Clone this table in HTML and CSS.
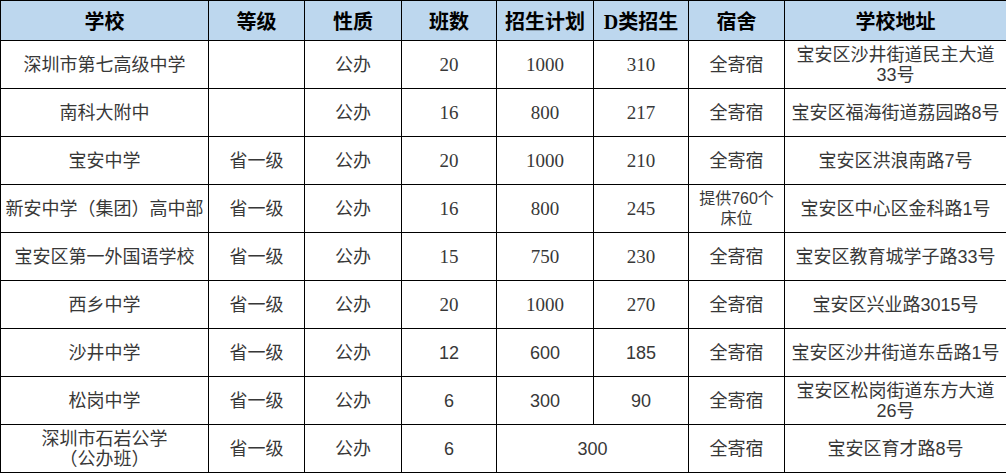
FILE: index.html
```html
<!DOCTYPE html>
<html lang="zh-CN">
<head>
<meta charset="utf-8">
<title>宝安区高中学校</title>
<link rel="stylesheet" href="styles.css">
</head>
<body>
<table class="schools">
  <colgroup>
    <col class="c-name"><col class="c-level"><col class="c-type"><col class="c-class">
    <col class="c-plan"><col class="c-d"><col class="c-dorm"><col class="c-addr">
  </colgroup>
  <thead>
    <tr class="head">
      <th>学校</th><th>等级</th><th>性质</th><th>班数</th><th>招生计划</th><th>D类招生</th><th>宿舍</th><th>学校地址</th>
    </tr>
  </thead>
  <tbody>
    <tr>
      <td>深圳市第七高级中学</td><td></td><td>公办</td><td class="serif">20</td><td class="serif">1000</td><td class="serif">310</td><td>全寄宿</td><td class="two">宝安区沙井街道民主大道<br>33号</td>
    </tr>
    <tr>
      <td>南科大附中</td><td></td><td>公办</td><td class="serif">16</td><td class="serif">800</td><td class="serif">217</td><td>全寄宿</td><td>宝安区福海街道荔园路8号</td>
    </tr>
    <tr>
      <td>宝安中学</td><td>省一级</td><td>公办</td><td class="serif">20</td><td class="serif">1000</td><td class="serif">210</td><td>全寄宿</td><td>宝安区洪浪南路7号</td>
    </tr>
    <tr>
      <td>新安中学（集团）高中部</td><td>省一级</td><td>公办</td><td class="serif">16</td><td class="serif">800</td><td class="serif">245</td><td class="two small">提供760个<br>床位</td><td>宝安区中心区金科路1号</td>
    </tr>
    <tr>
      <td>宝安区第一外国语学校</td><td>省一级</td><td>公办</td><td class="serif">15</td><td class="serif">750</td><td class="serif">230</td><td>全寄宿</td><td>宝安区教育城学子路33号</td>
    </tr>
    <tr>
      <td>西乡中学</td><td>省一级</td><td>公办</td><td class="serif">20</td><td class="serif">1000</td><td class="serif">270</td><td>全寄宿</td><td>宝安区兴业路3015号</td>
    </tr>
    <tr>
      <td>沙井中学</td><td>省一级</td><td>公办</td><td>12</td><td>600</td><td>185</td><td>全寄宿</td><td>宝安区沙井街道东岳路1号</td>
    </tr>
    <tr>
      <td>松岗中学</td><td>省一级</td><td>公办</td><td>6</td><td>300</td><td>90</td><td>全寄宿</td><td class="two">宝安区松岗街道东方大道<br>26号</td>
    </tr>
    <tr>
      <td class="two">深圳市石岩公学<br>（公办班）</td><td>省一级</td><td>公办</td><td>6</td><td colspan="2">300</td><td>全寄宿</td><td>宝安区育才路8号</td>
    </tr>
  </tbody>
</table>
</body>
</html>
```
FILE: styles.css
```css
html, body {
  margin: 0;
  padding: 0;
  background: #ffffff;
}

.schools {
  border-collapse: collapse;
  table-layout: fixed;
  width: 1006px;
  font-family: "Liberation Sans", "Noto Sans CJK SC", sans-serif;
  font-size: 18px;
  color: #383838;
}

.c-name { width: 208px; }
.c-level { width: 96px; }
.c-type { width: 97px; }
.c-class { width: 95px; }
.c-plan { width: 97px; }
.c-d { width: 95px; }
.c-dorm { width: 96px; }
.c-addr { width: 222px; }

.schools th,
.schools td {
  border: 1px solid #000000;
  text-align: center;
  vertical-align: middle;
  padding: 0 2px;
  white-space: nowrap;
  overflow: hidden;
}

.head {
  height: 40px;
  background: #bdd7ee;
}

.head th {
  font-family: "Liberation Serif", "Noto Sans CJK SC", serif;
  font-size: 20px;
  font-weight: 700;
  color: #000000;
}

.schools tbody tr {
  height: 48px;
}

.schools td {
  line-height: 20px;
}

.serif {
  font-family: "Liberation Serif", "Noto Sans CJK SC", serif;
  font-size: 19px;
}

.two {
  line-height: 19px;
}

.small {
  font-size: 16px;
}
```
